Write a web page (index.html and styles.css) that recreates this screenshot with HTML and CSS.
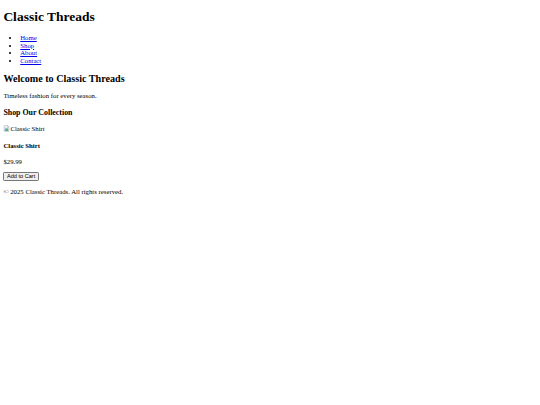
FILE: index.html
```html
<!DOCTYPE html>
<html lang="en">
<head>
<meta charset="utf-8">
<title>Classic Threads</title>
<link rel="stylesheet" href="styles.css">
</head>
<body class="page">
<header class="site-header">
  <h1 class="site-title">Classic Threads</h1>
  <nav class="site-nav">
    <ul class="nav-list">
      <li><a class="nav-link" href="#">Home</a></li>
      <li><a class="nav-link" href="#">Shop</a></li>
      <li><a class="nav-link" href="#">About</a></li>
      <li><a class="nav-link" href="#">Contact</a></li>
    </ul>
  </nav>
</header>
<main class="site-main">
  <section class="hero">
    <h2 class="hero-title">Welcome to Classic Threads</h2>
    <p class="text">Timeless fashion for every season.</p>
  </section>
  <section class="shop">
    <h3 class="shop-title">Shop Our Collection</h3>
    <div class="product">
      <span class="broken-img"><svg class="broken-icon" viewBox="0 0 16 16" width="7" height="7" aria-hidden="true"><path d="M2.5 1.5h8l3 3v10h-11z" fill="#fff" stroke="#8c8c8c"/><path d="M10.5 1.5v3h3" fill="none" stroke="#8c8c8c"/><rect x="4" y="6" width="8" height="7" fill="#8fc3ea"/><path d="M4 13l3-4 2 2 1.5-1.5L12 11v2z" fill="#3fa33f"/></svg><span class="alt-text">Classic Shirt</span></span>
      <h4 class="product-name">Classic Shirt</h4>
      <p class="text price">$29.99</p>
      <button class="btn" type="button">Add to Cart</button>
    </div>
  </section>
</main>
<footer class="site-footer">
  <p class="text copyright">&copy; 2025 Classic Threads. All rights reserved.</p>
</footer>
</body>
</html>
```
FILE: styles.css
```css
html { background: #fff; }
.page {
  margin: 3.375px;
  font-family: "Liberation Serif", "Times New Roman", serif;
  font-size: 6.75px;
  line-height: 7.76px;
  color: #000;
}
.site-header { margin: 0; }
.site-title {
  font-size: 13.5px;
  line-height: 15.5px;
  font-weight: bold;
  margin: 6px 0 9.045px;
}
.nav-list {
  margin: 6.75px 0;
  padding-left: 16.875px;
  list-style: disc;
}
.nav-list li { line-height: 7.76px; }
.nav-link { color: #0000ee; text-decoration: underline; }
.hero-title {
  font-size: 10.125px;
  line-height: 11.64px;
  font-weight: bold;
  margin: 8.4px 0 7.4px;
}
.text { margin: 6.75px 0; }
.shop-title {
  font-size: 7.9px;
  line-height: 9.08px;
  font-weight: bold;
  margin: 7.9px 0;
}
.broken-img {
  display: inline-flex;
  align-items: center;
}
.broken-icon { display: block; }
.product-name {
  font-size: 6.75px;
  line-height: 7.76px;
  font-weight: bold;
  margin: 8px 0;
}
.price { margin-bottom: 6.4px; }
.copyright { margin-top: 6.4px; }
.btn {
  font-family: "Liberation Sans", Arial, sans-serif;
  font-size: 5.625px;
  line-height: 6.5px;
  padding: 0.42px 2.53px;
  margin: 0;
  background: #efefef;
  color: #000;
  border: 0.7px solid #767676;
  border-radius: 1.2px;
}
```
